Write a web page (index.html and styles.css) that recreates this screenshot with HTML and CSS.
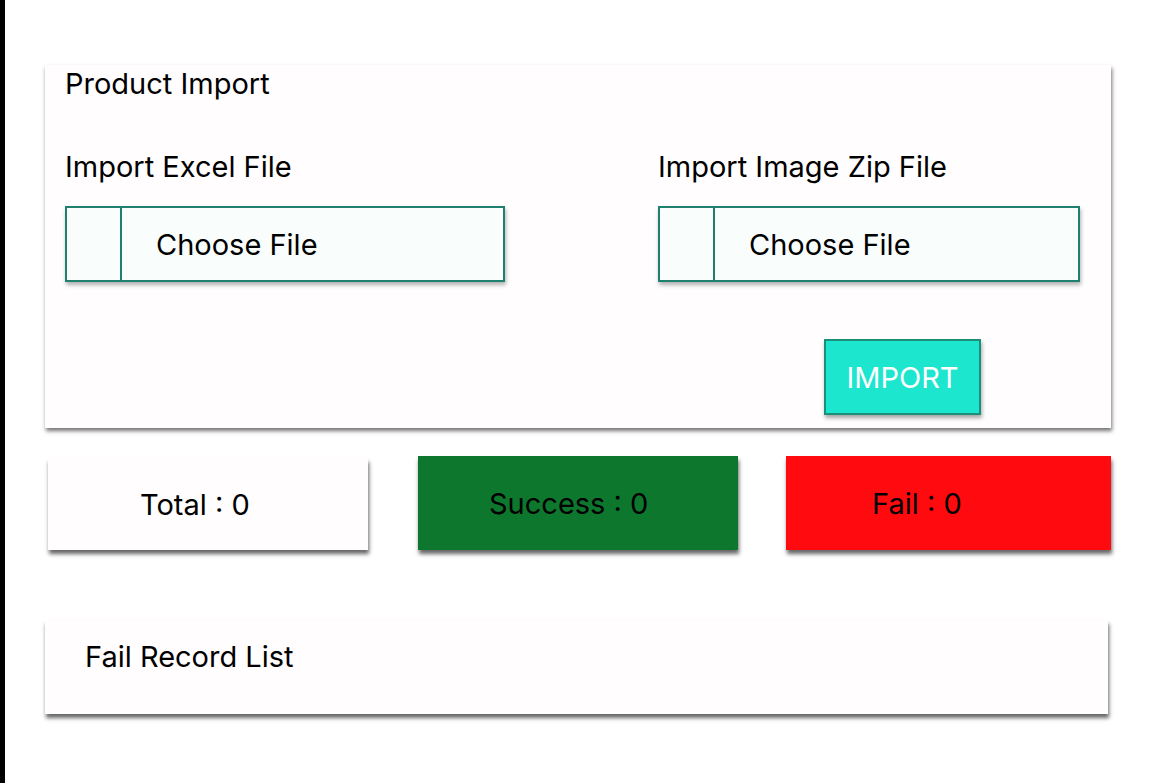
FILE: index.html
```html
<!DOCTYPE html>
<html>
<head>
<meta charset="utf-8">
<link rel="stylesheet" href="styles.css">
</head>
<body>
<div class="page">
  <section class="card import-card">
    <div class="card-title">Product Import</div>
    <div class="fields">
      <div class="field field-excel">
        <div class="field-label">Import Excel File</div>
        <div class="file-input">
          <span class="file-btn"></span>
          <span class="file-text">Choose File</span>
        </div>
      </div>
      <div class="field field-zip">
        <div class="field-label">Import Image Zip File</div>
        <div class="file-input">
          <span class="file-btn"></span>
          <span class="file-text">Choose File</span>
        </div>
      </div>
    </div>
    <div class="actions">
      <button class="import-btn">IMPORT</button>
    </div>
  </section>

  <section class="stats">
    <div class="stat stat-total">Total : 0</div>
    <div class="stat stat-success">Success : 0</div>
    <div class="stat stat-fail">Fail : 0</div>
  </section>

  <section class="card fail-card">
    <div class="fail-title">Fail Record List</div>
  </section>
</div>
</body>
</html>
```

FILE: styles.css
```css
html, body {
  margin: 0;
  padding: 0;
  background: #ffffff;
}
body {
  font-family: "Inter", "Noto Sans", sans-serif;
  color: #000;
  width: 1162px;
  height: 783px;
  overflow: hidden;
}
.page {
  border-left: 5px solid #000;
  height: 783px;
  box-sizing: border-box;
  padding: 65px 0 0 40px;
}
.card {
  background: #fffdfd;
  box-shadow: 1px 3px 4px rgba(0, 0, 0, 0.55);
}
.import-card {
  width: 1066px;
  height: 363px;
  box-sizing: border-box;
  padding: 2px 20px 0 20px;
}
.card-title {
  font-size: 29px;
  line-height: 34px;
}
.fields {
  display: flex;
  margin-top: 49px;
}
.field-excel { width: 440px; }
.field-zip { width: 422px; margin-left: 153px; }
.field-label {
  font-size: 29px;
  line-height: 34px;
}
.file-input {
  margin-top: 22px;
  height: 76px;
  box-sizing: border-box;
  border: 2px solid #1f806f;
  background: #f9fdfc;
  display: flex;
  align-items: center;
  box-shadow: 1px 3px 4px rgba(0, 0, 0, 0.3);
}
.file-btn {
  width: 55px;
  height: 100%;
  border-right: 2px solid #1f806f;
  box-sizing: border-box;
}
.file-text {
  font-size: 29px;
  margin-left: 34px;
}
.actions {
  display: flex;
  margin-top: 57px;
  padding-left: 759px;
}
.import-btn {
  width: 157px;
  height: 76px;
  background: #1de6cf;
  border: 2px solid #1a8f7a;
  color: #fff;
  font-family: "Inter", "Noto Sans", sans-serif;
  font-size: 29px;
  padding: 0;
  box-shadow: 1px 3px 4px rgba(0, 0, 0, 0.35);
}
.stats {
  display: flex;
  margin-top: 28px;
  padding-left: 3px;
}
.stat {
  height: 94px;
  display: flex;
  align-items: center;
  font-size: 29px;
  box-sizing: border-box;
  box-shadow: 1px 4px 4px rgba(0, 0, 0, 0.6);
}
.stat-total {
  width: 320px;
  background: #fffdfd;
  padding-left: 92px;
  margin-top: 2px;
  height: 92px;
}
.stat-success {
  width: 320px;
  margin-left: 50px;
  background: #0e772e;
  padding-left: 71px;
}
.stat-fail {
  width: 325px;
  margin-left: 48px;
  background: #ff0a0e;
  padding-left: 86px;
}
.fail-card {
  margin-top: 70px;
  width: 1063px;
  height: 94px;
  box-sizing: border-box;
  padding: 20px 0 0 40px;
  box-shadow: 1px 4px 4px rgba(0, 0, 0, 0.6);
}
.fail-title {
  font-size: 29px;
  line-height: 34px;
}
```
